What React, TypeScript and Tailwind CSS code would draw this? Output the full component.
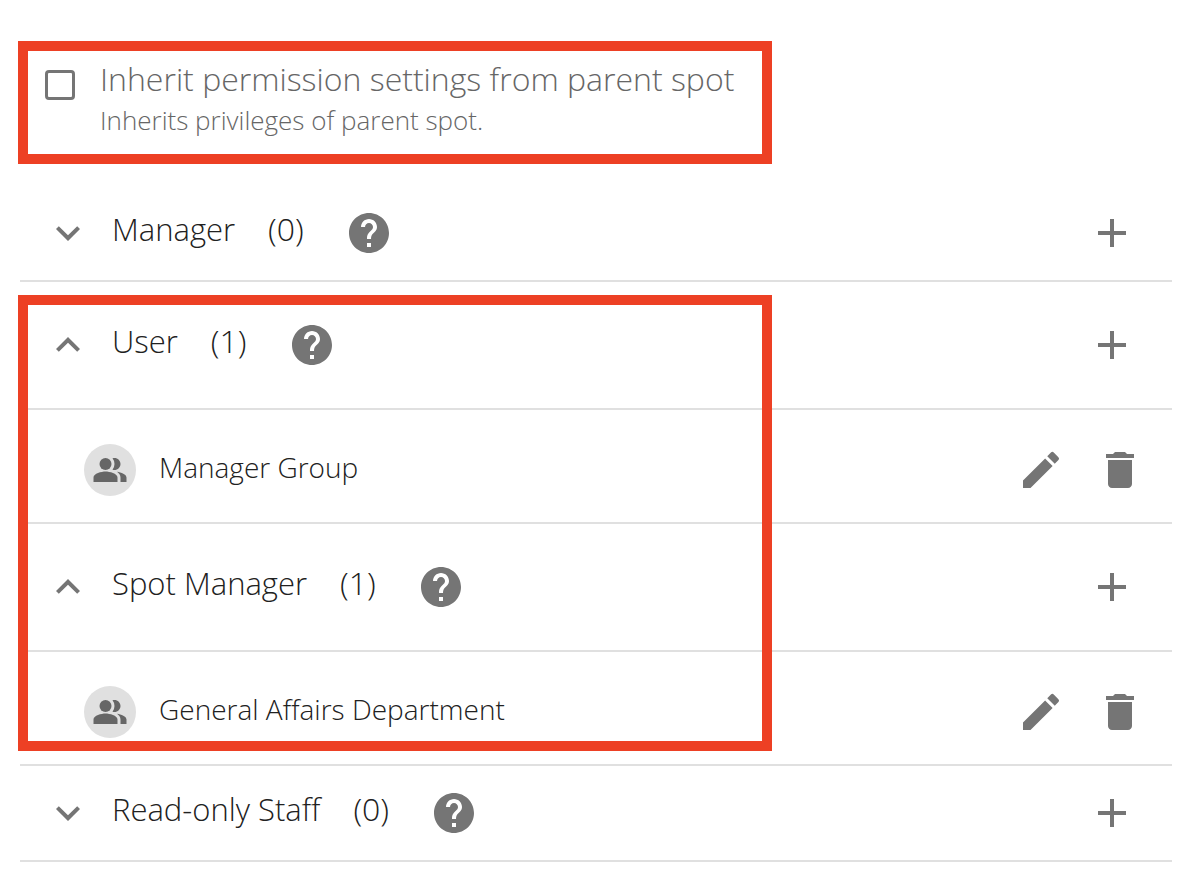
import { useState } from "react";
import { MdAdd, MdDelete, MdEdit, MdExpandLess, MdExpandMore, MdHelp, MdPeopleAlt } from "react-icons/md";
import clsx from "clsx";

type Role = {
  id: string;
  name: string;
  members: string[];
};

const manager: Role = { id: "manager", name: "Manager", members: [] };
const user: Role = { id: "user", name: "User", members: ["Manager Group"] };
const spotManager: Role = { id: "spot-manager", name: "Spot Manager", members: ["General Affairs Department"] };
const readOnly: Role = { id: "read-only", name: "Read-only Staff", members: [] };

function MemberRow({ name }: { name: string }) {
  return (
    <li className="flex h-[114px] items-center border-b-2 border-[#e0e0e0] pt-2 pr-7 pl-16">
      <span className="flex size-13 shrink-0 items-center justify-center rounded-full bg-[#e0e0e0] text-[#666666]">
        <MdPeopleAlt className="size-9" />
      </span>
      <span className="ml-[23px] flex-1 pb-1.5 text-[28px] leading-9">{name}</span>
      <div className="flex gap-[31px] text-[#757575]">
        <button type="button" aria-label={`Edit ${name}`}>
          <MdEdit className="size-12" />
        </button>
        <button type="button" aria-label={`Remove ${name}`}>
          <MdDelete className="size-12" />
        </button>
      </div>
    </li>
  );
}

function RoleSection({ role }: { role: Role }) {
  const [open, setOpen] = useState(role.members.length > 0);

  return (
    <section>
      <div className={clsx("flex items-center border-b-2 border-[#e0e0e0] pr-9 pl-6", open ? "h-32" : "h-24")}>
        <button
          type="button"
          aria-expanded={open}
          aria-label={`Toggle ${role.name}`}
          onClick={() => setOpen(!open)}
          className="text-[#757575]"
        >
          {open ? <MdExpandLess className="size-12" /> : <MdExpandMore className="size-12" />}
        </button>
        <h2 className="ml-5 pb-2 text-[31px] leading-10">{role.name}</h2>
        <span className="ml-[33px] pb-2 text-[32px] leading-10">({role.members.length})</span>
        <button type="button" aria-label={`About ${role.name}`} className="ml-[41px] text-[#757575]">
          <MdHelp className="size-12" />
        </button>
        <button type="button" aria-label={`Add ${role.name}`} className="ml-auto text-[#757575]">
          <MdAdd className="size-12" />
        </button>
      </div>
      {open && (
        <ul>
          {role.members.map((member) => (
            <MemberRow key={member} name={member} />
          ))}
        </ul>
      )}
    </section>
  );
}

export default function App() {
  const [inherit, setInherit] = useState(false);

  return (
    <main className="min-h-screen bg-white pt-[41px] pr-6 pb-5 pl-5 font-['Open_Sans',sans-serif] font-light text-[#212121]">
      <div className="-ml-0.5 flex h-[123px] w-[754px] max-w-full items-start border-10 border-[#ed4024] pt-[7px] pl-[17px] text-[#666666]">
        <input
          id="inherit"
          type="checkbox"
          checked={inherit}
          onChange={(e) => setInherit(e.target.checked)}
          aria-describedby="inherit-help"
          className="mt-3 size-[30px] shrink-0 appearance-none rounded-[4px] border-3 border-[#757575] checked:bg-[#757575]"
        />
        <div className="ml-[25px]">
          <label htmlFor="inherit" className="block text-[32px] leading-[42px]">
            Inherit permission settings from parent spot
          </label>
          <p id="inherit-help" className="text-[26px] leading-10">
            Inherits privileges of parent spot.
          </p>
        </div>
      </div>

      <div className="mt-[22px]">
        <RoleSection role={manager} />
        <div className="relative">
          <RoleSection role={user} />
          <RoleSection role={spotManager} />
          {/* highlight frame over the roles that have members */}
          <div className="pointer-events-none absolute top-[13px] bottom-[15px] -left-0.5 w-[754px] max-w-full border-10 border-[#ed4024]" />
        </div>
        <RoleSection role={readOnly} />
      </div>
    </main>
  );
}
